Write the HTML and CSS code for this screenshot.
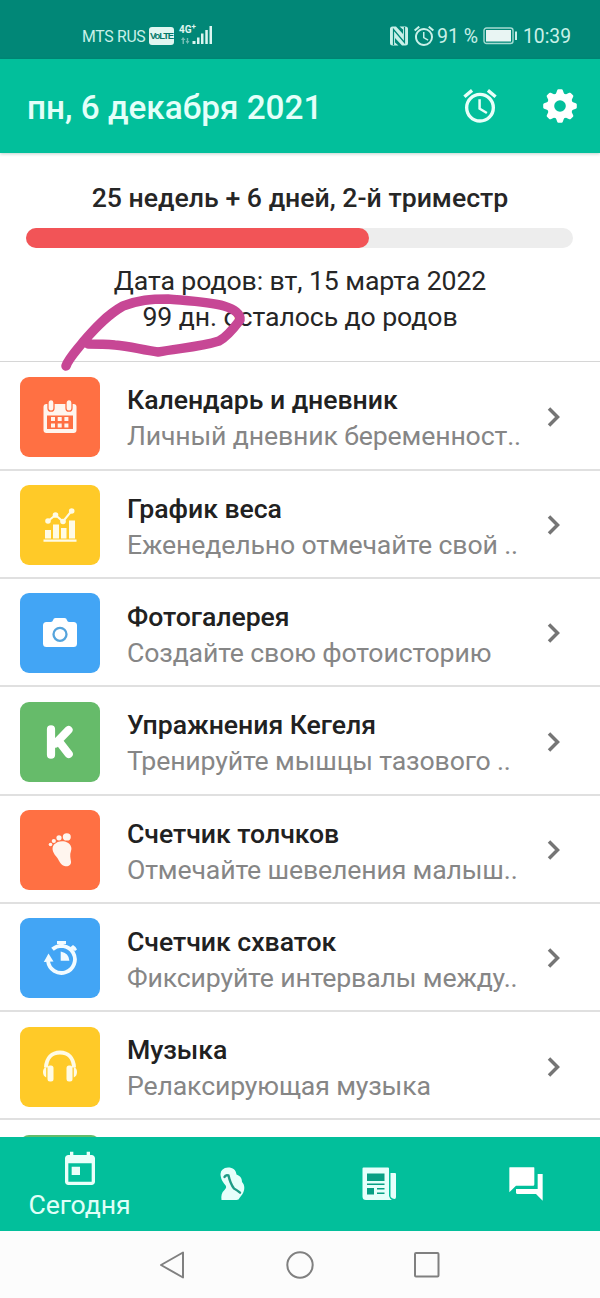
FILE: index.html
```html
<!DOCTYPE html>
<html lang="ru">
<head>
<meta charset="utf-8">
<title>Календарь беременности</title>
<link rel="stylesheet" href="styles.css">
</head>
<body>
<div class="screen">
  <div class="status">
    <span class="carrier">MTS RUS</span>
    <span class="volte">VoLTE</span>
    <span class="network">
      <span class="gen">4G<sup>+</sup></span>
      <svg class="signal" width="34" height="28" viewBox="0 0 34 28">
        <path fill="#fff" opacity=".45" d="M4 14l2.500 3H5v4H3.500v-4H2zM8.500 21L6.500 18h1.300v-3h1.400v3h1.300z"/>
        <path fill="#dcf5f0" d="M13.500 18h3v3h-3zM18 14.500h2.500V21H18zM22 10.500h2.500V21H22zM26.300 7h2.500v14h-2.500zM30.500 3H33v18h-2.500z"/>
      </svg>
    </span>
    <svg class="nfc" width="20" height="20" viewBox="0 0 20 20">
      <path fill="#c9f0e8" d="M3.500 .500H7L14 8V3.500L10.500.500H16.500Q19 .500 19 3v14q0 2.500-2.500 2.500H13L6 12v4.500l3.500 3H3.500Q1 19.500 1 17V3Q1 .500 3.500 .500z"/>
      <path fill="none" stroke="#018777" stroke-width="1.200" d="M4.500 19V3.500l11 13V1"/>
    </svg>
    <svg class="mini-alarm" width="20" height="20" viewBox="2 2 20 20"><path fill="#c9f0e8" d="M22 5.720l-4.600-3.860-1.290 1.530 4.600 3.860L22 5.720zM7.880 3.390L6.600 1.860 2 5.710l1.290 1.530 4.590-3.850zM12.500 8H11v6l4.750 2.850.75-1.230-4-2.370V8zM12 4c-4.970 0-9 4.030-9 9s4.020 9 9 9a9 9 0 0 0 0-18zm0 16c-3.870 0-7-3.130-7-7s3.130-7 7-7 7 3.130 7 7-3.130 7-7 7z"/></svg>
    <span class="percent">91 %</span>
    <svg class="battery" width="36" height="18" viewBox="0 0 36 18">
      <rect x="1" y="1" width="29" height="15.500" rx="2.500" fill="none" stroke="#a5dbd2" stroke-width="1.400"/>
      <rect x="3" y="3" width="25" height="11.500" fill="#e9f5f3"/>
      <rect x="32" y="4.500" width="2" height="8.500" fill="#c9f0e8"/>
    </svg>
    <span class="clock">10:39</span>
  </div>

  <header class="appbar">
    <h1 class="date">пн, 6 декабря 2021</h1>
    <svg class="alarm" width="40" height="40" viewBox="0 0 24 24"><path fill="#e8fff9" d="M22 5.720l-4.600-3.860-1.290 1.530 4.600 3.860L22 5.720zM7.880 3.390L6.600 1.860 2 5.710l1.290 1.530 4.590-3.850zM12.500 8H11v6l4.750 2.850.75-1.230-4-2.370V8zM12 4c-4.970 0-9 4.030-9 9s4.020 9 9 9a9 9 0 0 0 0-18zm0 16c-3.870 0-7-3.130-7-7s3.130-7 7-7 7 3.130 7 7-3.130 7-7 7z"/></svg>
    <svg class="gear" width="40" height="40" viewBox="0 0 40 40">
      <g fill="#fff">
        <circle cx="20" cy="20" r="13"/>
        <g id="teeth"><path id="tooth" d="M15.500 9l1.700-4.800q.3-1 1.200-1h3.200q.9 0 1.200 1l1.700 4.800z"/>
        <use href="#tooth" transform="rotate(45 20 20)"/><use href="#tooth" transform="rotate(90 20 20)"/><use href="#tooth" transform="rotate(135 20 20)"/></g>
        <use href="#teeth" transform="rotate(180 20 20)"/>
      </g>
      <circle cx="20" cy="20" r="5.800" fill="#02bf9b"/>
    </svg>
  </header>

  <section class="summary">
    <p class="term">25 недель + 6 дней, 2-й триместр</p>
    <div class="bar"><div class="fill"></div></div>
    <p class="due">Дата родов: вт, 15 марта 2022</p>
    <p class="left">99 дн. осталось до родов</p>
    <svg class="scribble" width="200" height="90" viewBox="55 285 200 90">
      <path fill="none" stroke="#c74795" stroke-width="9.500" stroke-linecap="round" stroke-linejoin="round" d="M66 366C69 358 77 350 83 342C95 328 107 315 123 306C139 300 150 299 168 299C190 301 210 302 224 306C234 309 241 314 240 320C234 328 227 337 219 341C200 347 180 348 158 352C142 350 130 346 115 345C104 344 95 344 88 344"/>
    </svg>
  </section>

  <main class="list">
    <div class="row">
      <span class="tile orange"><svg width="36" height="36" viewBox="0 0 36 36">
        <rect x="1.500" y="5" width="33" height="29" rx="3" fill="#fff5ee"/>
        <path fill="#ff7043" d="M5 16.500h26V30H5z"/>
        <path fill="#fff5ee" d="M9 18h4v4H9zM15.700 18h4v4h-4zM22.400 18h4v4h-4zM9 24.500h4v4H9zM15.700 24.500h4v4h-4zM22.400 24.500h4v4h-4z"/>
        <g fill="#fff5ee" stroke="#ff7043" stroke-width="1.300"><rect x="6" y="0.700" width="6" height="11.500" rx="3"/><rect x="24" y="0.700" width="6" height="11.500" rx="3"/></g>
      </svg></span>
      <div class="text"><h2>Календарь и дневник</h2><p>Личный дневник беременност..</p></div>
      <svg class="chev" width="16" height="22" viewBox="0 0 16 22"><path d="M3 2.500l8.500 8.500L3 19.500"/></svg>
    </div>
    <div class="row">
      <span class="tile yellow"><svg width="36" height="36" viewBox="0 0 36 36">
        <path fill="#fffbe5" d="M1.500 32.500h33v2.200h-33zM3 23h6v8.500H3zM11 17.500h6v14h-6zM19 21h5.500v10.500H19zM27 13.500h6v18h-6z"/>
        <path fill="none" stroke="#fffbe5" stroke-width="2" d="M5.500 14.500l8-6.500 7.500 6.500L29.500 4"/>
        <g fill="#fffbe5"><circle cx="6" cy="14" r="2.800"/><circle cx="13.500" cy="8" r="2.800"/><circle cx="21" cy="14.500" r="2.800"/><circle cx="29.700" cy="4" r="2.800"/></g>
      </svg></span>
      <div class="text"><h2>График веса</h2><p>Еженедельно отмечайте свой ..</p></div>
      <svg class="chev" width="16" height="22" viewBox="0 0 16 22"><path d="M3 2.500l8.500 8.500L3 19.500"/></svg>
    </div>
    <div class="row">
      <span class="tile blue"><svg width="36" height="36" viewBox="0 0 36 36">
        <path fill="#fff" d="M4.500 7H9q1.500 0 2-1.800.5-2.200 2.500-2.200h9q2 0 2.500 2.200Q25.500 7 27 7h4.500q3.500 0 3.500 3.500v18q0 3.500-3.500 3.500h-27Q1 32 1 28.500v-18Q1 7 4.500 7z"/>
        <circle cx="18" cy="19.300" r="6.500" fill="none" stroke="#55a4dc" stroke-width="2.300"/>
      </svg></span>
      <div class="text"><h2>Фотогалерея</h2><p>Создайте свою фотоисторию</p></div>
      <svg class="chev" width="16" height="22" viewBox="0 0 16 22"><path d="M3 2.500l8.500 8.500L3 19.500"/></svg>
    </div>
    <div class="row">
      <span class="tile green"><svg width="36" height="36" viewBox="0 0 36 36"><path fill="none" stroke="#fff" stroke-width="8.200" stroke-linecap="round" stroke-linejoin="round" d="M9 5.300v25.400M26.500 6L13.500 19.500M17 17.500l9.700 12.500"/></svg></span>
      <div class="text"><h2>Упражнения Кегеля</h2><p>Тренируйте мышцы тазового ..</p></div>
      <svg class="chev" width="16" height="22" viewBox="0 0 16 22"><path d="M3 2.500l8.500 8.500L3 19.500"/></svg>
    </div>
    <div class="row">
      <span class="tile orange"><svg width="36" height="36" viewBox="0 0 36 36"><g fill="#fff5ee">
        <ellipse cx="24.800" cy="4.900" rx="4" ry="3.600"/><circle cx="17" cy="5.800" r="2.600"/><circle cx="11.800" cy="9" r="2.100"/><circle cx="8.500" cy="12.500" r="1.800"/>
        <path d="M12 12.500C15 9.500 19 8.500 23 9.500C28 11 30.500 15 29 19C27.500 23 28.500 26 29 29.500C29.500 33 26 35 22.500 34C18.500 33 17.500 29 15 25.500C12 22 8.500 17 12 12.500z"/></g>
      </svg></span>
      <div class="text"><h2>Счетчик толчков</h2><p>Отмечайте шевеления малыш..</p></div>
      <svg class="chev" width="16" height="22" viewBox="0 0 16 22"><path d="M3 2.500l8.500 8.500L3 19.500"/></svg>
    </div>
    <div class="row">
      <span class="tile blue"><svg width="36" height="36" viewBox="0 0 36 36">
        <path fill="none" stroke="#f2fbff" stroke-width="3.800" d="M10.500 9.300A13.500 13.500 0 1 1 6 21"/>
        <path fill="#f2fbff" d="M1.800 22L6.500 13.500 11.500 21.500zM15 1h9v3h-2.500v4h-4V4H15zM28 7.500L31 5q3 1.500 4 4.500l-2 1.500zM18.700 11.500v9.200h8.700q-.5-7.700-8.700-9.200z"/>
      </svg></span>
      <div class="text"><h2>Счетчик схваток</h2><p>Фиксируйте интервалы между..</p></div>
      <svg class="chev" width="16" height="22" viewBox="0 0 16 22"><path d="M3 2.500l8.500 8.500L3 19.500"/></svg>
    </div>
    <div class="row">
      <span class="tile yellow"><svg width="36" height="36" viewBox="0 0 36 36">
        <path fill="none" stroke="#fffbe5" stroke-width="4" d="M4 18.500C4.500 9 10 3.500 18 3.500s13.500 5.500 14 15"/>
        <g fill="#fffbe5"><rect x="5.500" y="16.500" width="6" height="16" rx="2.500"/><rect x="24.500" y="16.500" width="6" height="16" rx="2.500"/><path d="M4.200 18v10.500Q1 27 1 23t3.200-5zM31.800 18v10.500Q35 27 35 23t-3.200-5z"/></g>
      </svg></span>
      <div class="text"><h2>Музыка</h2><p>Релаксирующая музыка</p></div>
      <svg class="chev" width="16" height="22" viewBox="0 0 16 22"><path d="M3 2.500l8.500 8.500L3 19.500"/></svg>
    </div>
    <div class="row"><span class="tile lime"></span></div>
  </main>

  <nav class="tabs">
    <div class="tab current">
      <svg width="40" height="40" viewBox="0 0 24 24"><path fill="#eafffa" d="M19 3h-1V1h-2v2H8V1H6v2H5c-1.110 0-1.990.9-1.990 2L3 19c0 1.100.89 2 2 2h14c1.100 0 2-.9 2-2V5c0-1.100-.9-2-2-2zm0 16H5V8h14v11zM7 10h5v5H7z"/></svg>
      <span class="tab-label">Сегодня</span>
    </div>
    <div class="tab">
      <svg width="36" height="36" viewBox="0 0 36 36">
        <path fill="#e6fffb" d="M6.500 8Q7 2 14 1.500C19 1.500 22 4 22.500 8.500C27 10 28 13 28 16C31 19 31 24 28.500 28L25.500 32Q25 34 22.500 34H7.500C7 30 7.500 26.500 10.500 24C13 21.500 12.500 20 10 17.500Q6.500 13 6.500 8z"/>
        <path fill="none" stroke="#1f9b86" stroke-width="2.400" stroke-linecap="round" stroke-linejoin="round" d="M10.500 11q1-2.500 4-1.500C15.500 14 16.500 18 20 22.500Q23 24 26 26.700"/>
      </svg>
    </div>
    <div class="tab">
      <svg width="36" height="36" viewBox="0 0 36 36">
        <path fill="#e6fffb" d="M2.500 1.500H27q1 0 1 1V30q1 3 3 4H5q-3.500 0-3.500-3.500v-28q0-1 1-1zM29.500 7H34q1 0 1 1v23q0 2-1.500 2-4-1-4-3z"/>
        <path fill="#079f84" d="M6 7.500h17.500V15H6zM6 17.500h17.500v1.500H6zM6 22h7v6.500H6zM16 22h7.500v1.500H16zM16 26.500h7.500V28H16z"/>
      </svg>
    </div>
    <div class="tab">
      <svg width="40" height="40" viewBox="0 0 24 24"><path fill="#fff" d="M22 6h-3v9H6v2c0 .550.200 1 .700 1H18l4 4V6.500zM17 12V2.300c0-.2-.1-.3-.3-.3H2.300c-.2 0-.3.1-.3.3V17l4-4h10.500c.3 0 .5-.4.500-1z"/></svg>
    </div>
  </nav>

  <div class="sysnav">
    <svg width="28" height="30" viewBox="0 0 28 30"><path d="M24 2.500v25L2 15z"/></svg>
    <svg width="28" height="28" viewBox="0 0 28 28"><circle cx="14" cy="14" r="12.700"/></svg>
    <svg width="28" height="28" viewBox="0 0 28 28"><rect x="2" y="2" width="23.500" height="23.500" rx="1"/></svg>
  </div>
</div>
</body>
</html>
```
FILE: styles.css
```css
* { box-sizing: border-box; }
body { margin: 0; font-family: Roboto, "Noto Sans", sans-serif; background: #fff; }
h1, h2, p { margin: 0; }
svg { display: block; flex: none; }

.screen { display: flex; flex-direction: column; width: 600px; height: 1298px; overflow: hidden; }

.status { display: flex; align-items: center; flex: none; height: 59px; padding: 13px 28px 0 82px; background: #018777; color: #c9f0e8; white-space: nowrap; }
.carrier { flex: none; width: 67px; font-size: 15.8px; letter-spacing: -0.3px; }
.volte { flex: none; width: 25px; height: 18px; border-radius: 3px; background: #e0f6f1; color: #05796a; font: 700 9.5px/18px "Liberation Sans", sans-serif; letter-spacing: -1.1px; text-align: center; }
.network { position: relative; flex: none; width: 38px; height: 28px; }
.gen { position: absolute; left: 5px; top: 1px; color: #e0f6f1; font-size: 10px; font-weight: 700; line-height: 14px; }
.gen sup { font-size: 8px; line-height: 0; }
.signal { margin-left: 5px; margin-top: 1px; }
.nfc { margin-left: 177px; }
.mini-alarm { margin-left: 5px; }
.percent { flex: none; margin-left: 3px; width: 46px; font-size: 19.5px; }
.battery { width: 36px; }
.clock { margin-left: 4px; font-size: 19.3px; }

.appbar { display: flex; align-items: center; flex: none; height: 93.500px; padding: 0 20px 0 27px; background: #02bf9b; box-shadow: 0 1px 3px rgba(0, 80, 60, .25); z-index: 1; }
.date { flex: 1; font-size: 33.3px; font-weight: 500; line-height: 40px; color: #e4fff9; padding-top: 4px; }
.gear { margin-left: 40px; }

.summary { position: relative; flex: none; height: 209px; padding-top: 27.500px; border-bottom: 1.500px solid #d6d6d6; text-align: center; color: #262626; }
.term { font-size: 26.67px; font-weight: 500; line-height: 36px; }
.bar { height: 20px; margin: 11.500px 27px 15px 26px; border-radius: 10px; background: #ededed; }
.fill { width: 342.500px; height: 20px; border-radius: 10px; background: #f25457; }
.due, .left { font-size: 26.67px; line-height: 36px; letter-spacing: -0.09px; }
.scribble { position: absolute; left: 55px; top: 132.500px; z-index: 2; }

.list { flex: 1; min-height: 0; overflow: hidden; padding-top: 0.700px; }
.row { display: flex; height: 108.330px; padding: 14.500px 38px 0 20px; border-bottom: 2px solid #e0e0e0; }
.tile { display: flex; align-items: center; justify-content: center; flex: none; width: 80px; height: 80px; border-radius: 9px; }
.orange { background: #ff7043; }
.yellow { background: #ffca28; }
.blue { background: #42a5f5; }
.green { background: #66bb6a; }
.lime { background: #66bb6a; }
.text { flex: 1; min-width: 0; margin-left: 27px; padding-top: 5.500px; white-space: nowrap; }
.text h2 { font-size: 26.67px; font-weight: 500; line-height: 36px; color: #212121; letter-spacing: -0.04px; }
.text p { font-size: 26.67px; line-height: 36px; color: #868686; letter-spacing: -0.15px; }
.chev { margin-top: 29px; fill: none; stroke: #757575; stroke-width: 3.500px; }

.tabs { display: flex; flex: none; height: 93.500px; background: #02bf9b; }
.tab { display: flex; flex-direction: column; align-items: center; justify-content: center; width: 146.700px; }
.tab.current { width: 159px; justify-content: flex-start; padding-top: 13px; }
.tab-label { font-size: 26.67px; line-height: 30px; color: #e0fff8; letter-spacing: -0.1px; }

.sysnav { display: flex; justify-content: center; align-items: center; gap: 99px; flex: none; height: 67.500px; padding-top: 1px; background: #fcfcfc; }
.sysnav svg { fill: none; stroke: #808080; stroke-width: 2px; stroke-linejoin: round; }
```
